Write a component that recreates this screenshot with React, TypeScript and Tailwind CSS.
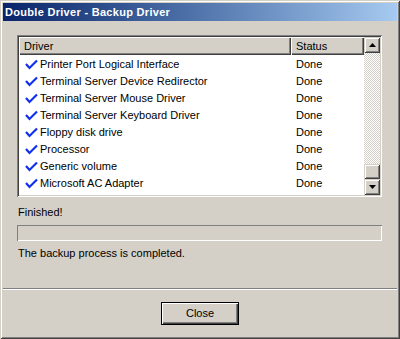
import React from "react";

const rows = [
  "Printer Port Logical Interface",
  "Terminal Server Device Redirector",
  "Terminal Server Mouse Driver",
  "Terminal Server Keyboard Driver",
  "Floppy disk drive",
  "Processor",
  "Generic volume",
  "Microsoft AC Adapter",
];

function Check() {
  return (
    <svg width="13" height="11" viewBox="0 0 13 11" className="shrink-0">
      <path d="M1 5 L4.5 9 L12 1.5" stroke="#1030f0" strokeWidth="2.2" fill="none" />
    </svg>
  );
}

function Arrow({ down }: { down?: boolean }) {
  return (
    <svg width="7" height="4" viewBox="0 0 7 4">
      <path d={down ? "M0 0 H7 L3.5 4 Z" : "M0 4 H7 L3.5 0 Z"} fill="#000" />
    </svg>
  );
}

export default function App() {
  return (
    <div
      className="w-[400px] h-[339px] bg-[#d4d0c8] p-[3px] flex flex-col text-[11px] text-black shadow-[inset_1px_1px_0_#d4d0c8,inset_-1px_-1px_0_#404040,inset_2px_2px_0_#fff,inset_-2px_-2px_0_#808080]"
      style={{ fontFamily: '"Liberation Sans", Arial, sans-serif' }}
    >
      {/* ---------- TITLE BAR ---------- */}
      <div className="h-[18px] shrink-0 flex items-center pl-[2px] bg-gradient-to-r from-[#0a246a] to-[#a6caf0]">
        <span className="text-white font-bold text-[11px] tracking-[0.3px]">Double Driver - Backup Driver</span>
      </div>

      <div className="flex flex-col pl-[14px] pr-[15px]">
        {/* ---------- LISTA ---------- */}
        <div className="mt-[14px] h-[162px] bg-white p-[2px] flex shadow-[inset_1px_1px_0_#808080,inset_-1px_-1px_0_#fff,inset_2px_2px_0_#404040,inset_-2px_-2px_0_#d4d0c8]">
          <div className="flex-1 flex flex-col overflow-hidden">
            <div className="flex h-[18px] shrink-0">
              <div className="w-[272px] bg-[#d4d0c8] pl-[5px] flex items-center shadow-[inset_1px_1px_0_#fff,inset_-1px_-1px_0_#404040,inset_-2px_-2px_0_#808080]">
                Driver
              </div>
              <div className="flex-1 bg-[#d4d0c8] pl-[5px] flex items-center shadow-[inset_1px_1px_0_#fff,inset_-1px_-1px_0_#404040,inset_-2px_-2px_0_#808080]">
                Status
              </div>
            </div>
            {rows.map((r) => (
              <div key={r} className="flex h-[17px] shrink-0 items-center pt-[2px]">
                <div className="w-[272px] flex items-center pl-[6px] gap-[2px]">
                  <Check />
                  <span>{r}</span>
                </div>
                <div className="pl-[5px]">Done</div>
              </div>
            ))}
          </div>
          {/* scrollbar */}
          <div className="w-[16px] flex flex-col">
            <div className="h-[16px] bg-[#d4d0c8] flex items-center justify-center shadow-[inset_1px_1px_0_#d4d0c8,inset_-1px_-1px_0_#404040,inset_2px_2px_0_#fff,inset_-2px_-2px_0_#808080]">
              <Arrow />
            </div>
            <div className="flex-1 [background:repeating-conic-gradient(#d4d0c8_0_25%,#fff_0_50%)_0_0/2px_2px]" />
            <div className="h-[15px] bg-[#d4d0c8] shadow-[inset_1px_1px_0_#d4d0c8,inset_-1px_-1px_0_#404040,inset_2px_2px_0_#fff,inset_-2px_-2px_0_#808080]" />
            <div className="h-[16px] bg-[#d4d0c8] flex items-center justify-center shadow-[inset_1px_1px_0_#d4d0c8,inset_-1px_-1px_0_#404040,inset_2px_2px_0_#fff,inset_-2px_-2px_0_#808080]">
              <Arrow down />
            </div>
          </div>
        </div>

        <p className="mt-[9px] leading-[13px] pl-px">Finished!</p>
        <div className="mt-[6px] h-[16px] shadow-[inset_1px_1px_0_#808080,inset_-1px_-1px_0_#fff]" />
        <p className="mt-[6px] leading-[13px] pl-px">The backup process is completed.</p>
      </div>

      <div className="mt-[28px] border-t border-t-[#808080] border-b border-b-white" />

      <div className="flex justify-center mt-[12px]">
        <button className="w-[78px] h-[23px] border border-black bg-[#d4d0c8] shadow-[inset_1px_1px_0_#fff,inset_-1px_-1px_0_#404040,inset_-2px_-2px_0_#808080] text-[11px]">
          Close
        </button>
      </div>
    </div>
  );
}
